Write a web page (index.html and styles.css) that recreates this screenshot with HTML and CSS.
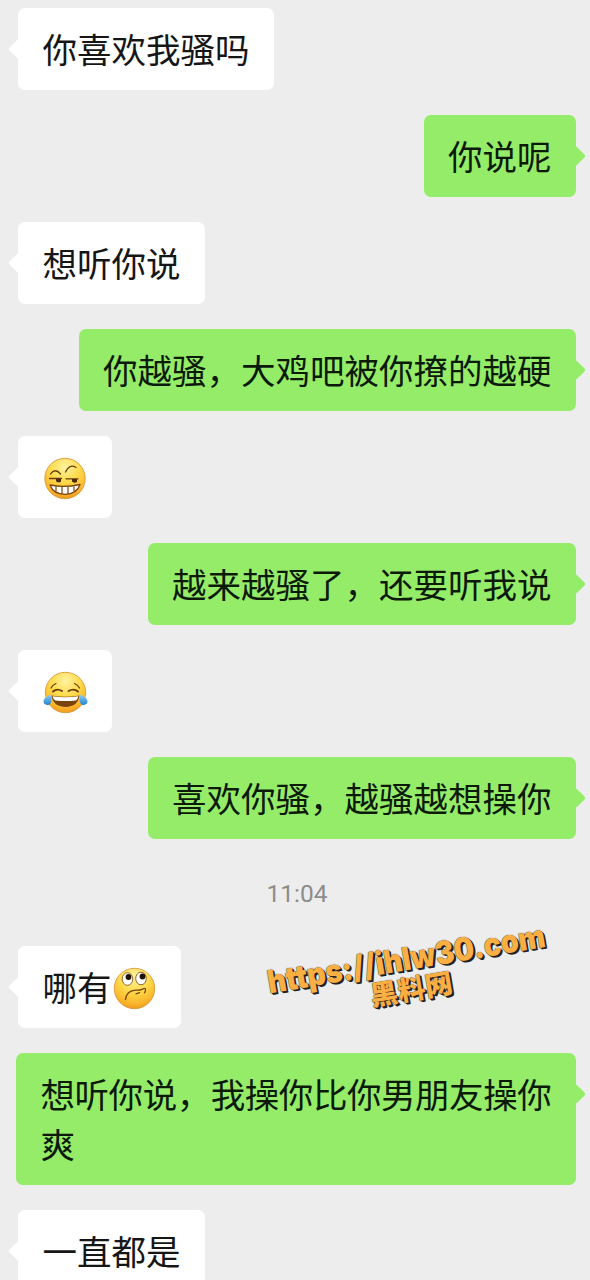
FILE: index.html
```html
<!DOCTYPE html>
<html lang="zh-CN">
<head>
<meta charset="utf-8">
<title>聊天</title>
<link rel="stylesheet" href="styles.css">
</head>
<body>
<svg class="defs" aria-hidden="true">
  <defs>
    <radialGradient id="face" cx="50%" cy="22%" r="82%">
      <stop offset="0" stop-color="#fff3a0"/>
      <stop offset=".45" stop-color="#fdda4a"/>
      <stop offset=".8" stop-color="#fab52b"/>
      <stop offset="1" stop-color="#ec8f1c"/>
    </radialGradient>
    <linearGradient id="tear" x1="0" y1="0" x2="0" y2="1">
      <stop offset="0" stop-color="#8fd0f5"/>
      <stop offset="1" stop-color="#2383d0"/>
    </linearGradient>
  </defs>
</svg>
<main class="chat">
  <div class="bubble theirs"><span class="text">你喜欢我骚吗</span></div>
  <div class="bubble mine"><span class="text">你说呢</span></div>
  <div class="bubble theirs"><span class="text">想听你说</span></div>
  <div class="bubble mine"><span class="text">你越骚，大鸡吧被你撩的越硬</span></div>
  <div class="bubble theirs">
    <svg class="emoji" viewBox="0 0 45 45">
      <circle cx="22" cy="22.5" r="20.2" fill="url(#face)" stroke="#d9993c" stroke-width=".9"/>
      <g fill="none" stroke="#6b3c0c" stroke-width="1.3" stroke-linecap="round">
        <path d="M7.500 18q4.500-6.500 10 0M22.500 16q4-8.500 10.500-4.500"/>
        <path d="M6.500 22.500h12M23 22.800h12"/>
      </g>
      <path d="M13 22.800h5v3q-3 1.500-5-.5zM29 23h5v3q-3 1.500-5-.5z" fill="#4a2808"/>
      <path d="M7 29q14.500 3 30-.5-3 9.500-15 9.800-11.500 0-15-9.300z" fill="#fff" stroke="#7a430c" stroke-width="1.300" stroke-linejoin="round"/>
      <path d="M13 30.500v5M19 31v7M25 31v7M31 30.500v5" stroke="#7a430c" stroke-width="1.200"/>
    </svg>
  </div>
  <div class="bubble mine"><span class="text">越来越骚了，还要听我说</span></div>
  <div class="bubble theirs">
    <svg class="emoji" viewBox="0 0 45 45">
      <circle cx="22.500" cy="22.500" r="20.200" fill="url(#face)" stroke="#d9993c" stroke-width=".9"/>
      <g fill="none" stroke="#6b3c0c" stroke-linecap="round">
        <path d="M8 18q1.500-3 5-4.500M31.500 13.500q3.500 1.500 5 4.500" stroke-width="1.200"/>
        <path d="M10 21.500q4-3.500 9-.5M25.500 21q5.500-3 9.500.5" stroke-width="1.900"/>
      </g>
      <path d="M8.500 25.500q14 2.500 28 0-1.500 11-14 11.500-12.500-.5-14-11.500z" fill="#7a430c"/>
      <path d="M9.500 26.200q13 2.300 26 0-1 3.800-2.800 4.300-10.200 1.200-20.400 0-1.800-.5-2.800-4.300z" fill="#fff"/>
      <path d="M7.500 24.500c2 5 1 10.500-3.200 10.500-4.500 0-5-5-1.300-7.800zM37.500 24.500c-2 5-1 10.500 3.200 10.500 4.500 0 5-5 1.300-7.800z" fill="url(#tear)"/>
    </svg>
  </div>
  <div class="bubble mine"><span class="text">喜欢你骚，越骚越想操你</span></div>
  <time class="time">11:04</time>
  <div class="bubble theirs"><span class="text">哪有</span><svg class="emoji" viewBox="0 0 45 45">
      <circle cx="22.500" cy="22.500" r="20.200" fill="url(#face)" stroke="#d9993c" stroke-width=".9"/>
      <g fill="#fff" stroke="#84551a" stroke-width=".9">
        <ellipse cx="15.500" cy="13" rx="5.300" ry="6.300"/>
        <ellipse cx="29" cy="12.500" rx="5.300" ry="6.300"/>
      </g>
      <circle cx="16.500" cy="11" r="2.900" fill="#1c1209"/>
      <circle cx="30.500" cy="10.500" r="2.900" fill="#1c1209"/>
      <path d="M13.500 33.500c.5-5 3.500-8.500 8.500-9.200 3.500-.4 5.500.2 8-1 2.500-1.300 3.700-1.300 3.500.7-.1 1.200-.5 2-1 2.800M24 27.800l3.500-1.200" fill="none" stroke="#7a430c" stroke-width="1.300" stroke-linecap="round"/>
    </svg></div>
  <div class="bubble mine wrapped"><span class="text">想听你说，我操你比你男朋友操你爽</span></div>
  <div class="bubble theirs"><span class="text">一直都是</span></div>
</main>
<svg class="watermark" viewBox="0 0 320 130">
  <g transform="translate(9.500 93.500) rotate(-9.600)">
    <text class="mark-url" x="0" y="0" textLength="281" lengthAdjust="spacingAndGlyphs">https://ihlw30.com</text>
    <text class="mark-name" x="99" y="29.500" textLength="83">黑料网</text>
  </g>
</svg>
</body>
</html>
```
FILE: styles.css
```css
body {
  margin: 0;
  height: 1280px;
  overflow: hidden;
  position: relative;
  background: #ededed;
  font-family: "Noto Sans CJK SC", sans-serif;
}

.defs {
  position: absolute;
  width: 0;
  height: 0;
}

.chat {
  display: flex;
  flex-direction: column;
  gap: 25px;
  padding: 8px 14px 0 18px;
}

.bubble {
  position: relative;
  box-sizing: border-box;
  min-height: 82px;
  padding: 15px 24.5px 17px;
  border-radius: 7px;
  font-size: 34.5px;
  line-height: 50px;
  color: #161616;
  white-space: nowrap;
}

.bubble::before {
  content: "";
  position: absolute;
  top: 33.5px;
  width: 14px;
  height: 14px;
  border-radius: 2px;
  background: inherit;
  transform: rotate(45deg);
}

.theirs {
  align-self: flex-start;
  background: #fff;
}

.theirs::before {
  left: -7px;
}

.mine {
  align-self: flex-end;
  background: #95ec69;
  color: #0c1a08;
}

.mine::before {
  right: -7px;
}

.wrapped {
  width: 560px;
  margin-left: -2px;
  padding-right: 20px;
  letter-spacing: -0.45px;
  white-space: normal;
}

.emoji {
  display: inline-block;
  width: 45px;
  height: 45px;
  margin-top: 4.5px;
  vertical-align: top;
}

.time {
  align-self: center;
  height: 57px;
  line-height: 59px;
  font-family: Roboto, sans-serif;
  font-size: 24.5px;
  color: #8c8c8c;
}

.watermark {
  position: absolute;
  left: 260px;
  top: 900px;
  width: 320px;
  height: 130px;
  overflow: visible;
}

.mark-url,
.mark-name {
  fill: #fbae42;
  text-shadow: 1px 1px 0 #222, 2px 2px 0 #222, 0 0 1px #222;
}

.mark-url {
  font: 900 32px Inter, sans-serif;
}

.mark-name {
  font: 900 27.5px "Noto Sans CJK SC", sans-serif;
}
```
